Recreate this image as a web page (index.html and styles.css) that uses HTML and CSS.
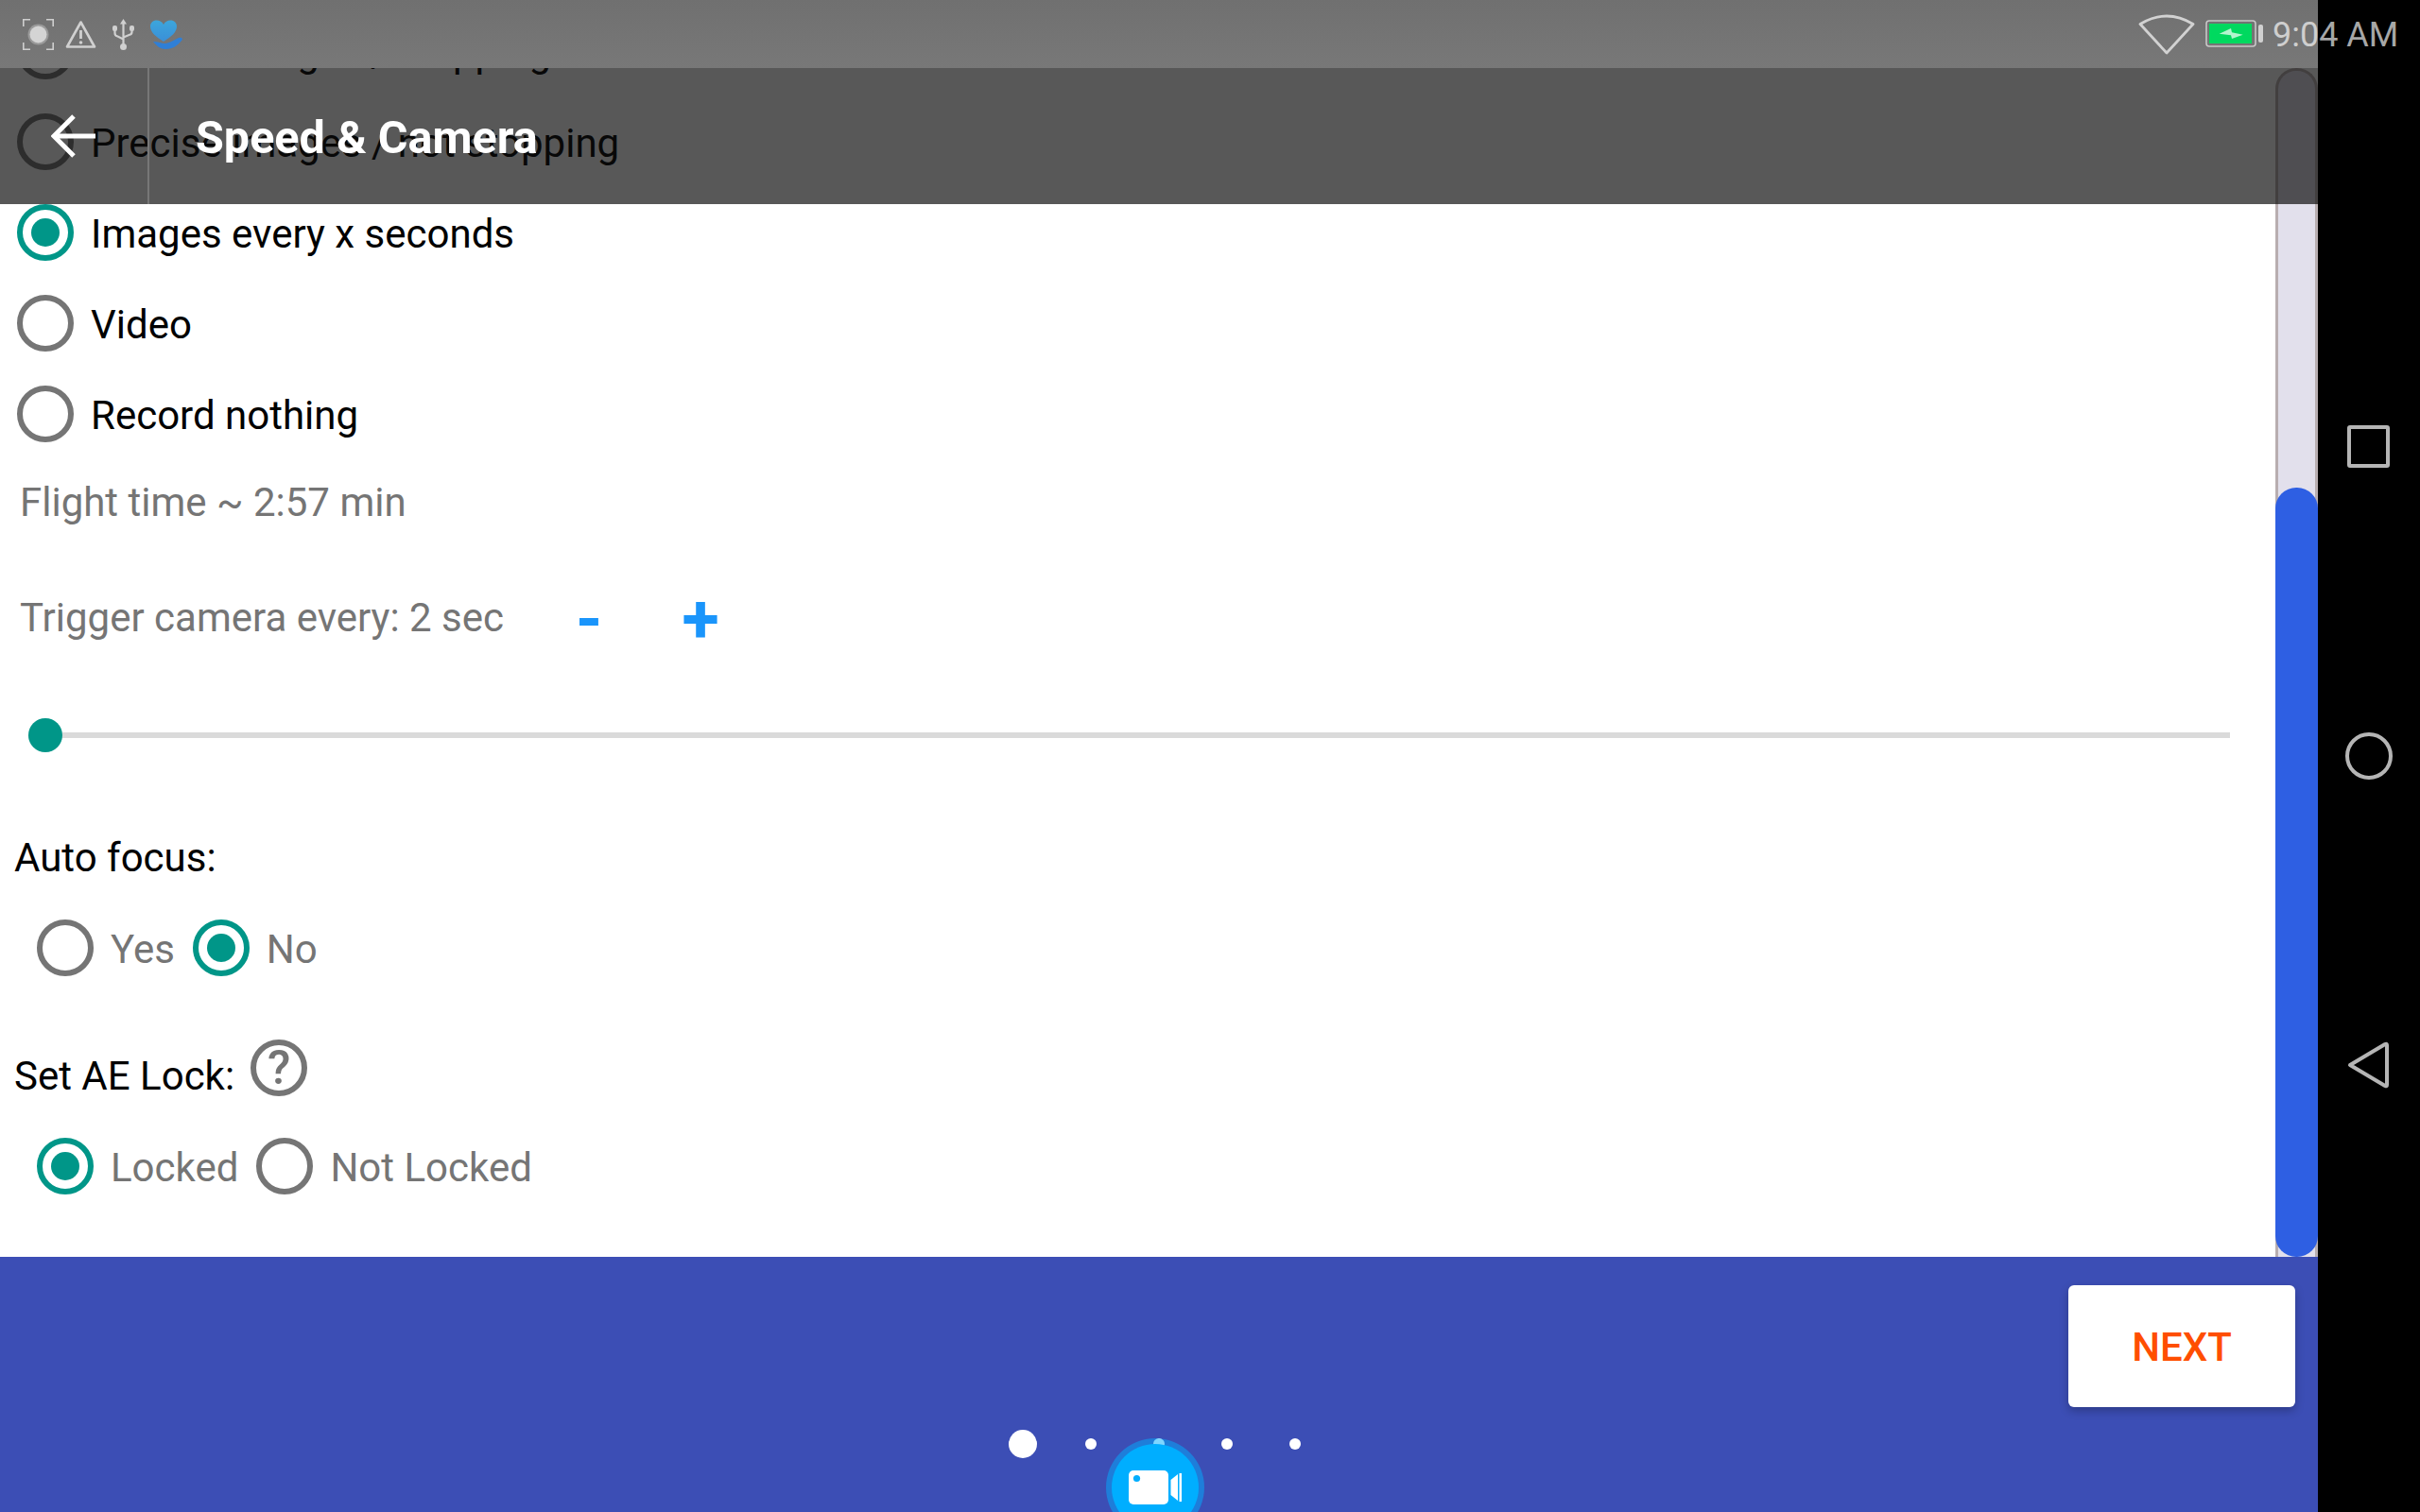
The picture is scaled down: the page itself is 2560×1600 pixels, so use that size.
FILE: index.html
```html
<!DOCTYPE html>
<html lang="en">
<head>
<meta charset="utf-8">
<title>Speed &amp; Camera</title>
<link rel="stylesheet" href="styles.css">
</head>
<body>
<div class="device">
  <div class="app">
    <header class="statusbar">
      <div class="status-left">
        <svg class="ic ic-focus" viewBox="0 0 33 33"><path d="M0.800 8V0.800H8M25 0.800H32.200V8M32.200 25V32.200H25M8 32.200H0.800V25" fill="none" stroke="#cfcfcf" stroke-width="1.600"/><circle cx="16.500" cy="16.500" r="11" fill="#9a9a9a"/><circle cx="16.500" cy="16.500" r="9" fill="#d4d4d4"/></svg>
        <svg class="ic ic-warn" viewBox="0 0 33 30"><path d="M16.500 2.500L31 28.500H2Z" fill="none" stroke="#d0d0d0" stroke-width="2.600" stroke-linejoin="round"/><path d="M16.500 11V20" stroke="#d0d0d0" stroke-width="2.800"/><circle cx="16.500" cy="24" r="1.800" fill="#d0d0d0"/></svg>
        <svg class="ic ic-usb" viewBox="0 0 23 33"><path d="M11.500 4V29M2.500 11V15Q2.500 18 5.500 18.500L11.500 21.500M20.500 11V14Q20.500 16.500 17.500 17L11.500 19.500" fill="none" stroke="#d0d0d0" stroke-width="2.200"/><path d="M11.500 0L15 5.500H8Z" fill="#d0d0d0"/><circle cx="11.500" cy="29.500" r="3.500" fill="#d0d0d0"/><rect x="0" y="7" width="5" height="6" rx="2" fill="#d0d0d0"/><rect x="18" y="7" width="5" height="6" rx="2" fill="#d0d0d0"/></svg>
        <svg class="ic ic-heart" viewBox="0 0 36 31"><defs><linearGradient id="hg" x1="0" y1="0" x2="0" y2="1"><stop offset="0" stop-color="#3ca6dc"/><stop offset="1" stop-color="#3a8fd8"/></linearGradient></defs><path d="M15 23C7 18 1 13 1 7C1 3 4 0.500 7.500 0.500C11 0.500 13.500 2 15 5C16.500 2 19 0.500 22.500 0.500C26 0.500 29 3 29 7C29 13 23 18 15 23Z" fill="url(#hg)"/><path d="M4 23C9 23 13 25 17 25C20 25 27 21 31 19C34 18 36 20 34 22C30 27 25 31 17 31C12 31 8 28 4 23Z" fill="#2f7fd6"/></svg>
      </div>
      <div class="status-right">
        <svg class="ic ic-wifi" viewBox="0 0 60 44"><path d="M2 11.500Q30 -5.500 58 11.500L30 42Z" fill="none" stroke="#d2d2d2" stroke-width="2.800" stroke-linejoin="round"/></svg>
        <svg class="ic ic-batt" viewBox="0 0 62 29"><rect x="1" y="1" width="52" height="27" rx="3" fill="none" stroke="#c8c8c8" stroke-width="1.600"/><rect x="4" y="4" width="45" height="21" fill="#00d95f"/><path d="M14.700 14.700L27 9L28 13.300L39.700 15.700L28 20L27 16.300Z" fill="#b4f5cf"/><rect x="56" y="5" width="5" height="19" rx="2" fill="#d0d0d0"/></svg>
        <span class="clock">9:04 AM</span>
      </div>
    </header>

    <main class="stage">
      <div class="scroller">
        <div class="form">
          <div class="radio-row"><span class="radio"></span><span class="label">Normal images / stopping</span></div>
          <div class="radio-row"><span class="radio"></span><span class="label">Precise images / not stopping</span></div>
          <div class="radio-row"><span class="radio on"></span><span class="label">Images every x seconds</span></div>
          <div class="radio-row"><span class="radio"></span><span class="label">Video</span></div>
          <div class="radio-row"><span class="radio"></span><span class="label">Record nothing</span></div>

          <div class="flight">Flight time ~ 2:57 min</div>
          <div class="trigger">
            <span class="trigger-text">Trigger camera every: 2 sec</span>
            <span class="step step-minus">-</span>
            <span class="step step-plus">+</span>
          </div>
          <div class="slider"><div class="track"><span class="thumb"></span></div></div>

          <div class="heading heading-focus">Auto focus:</div>
          <div class="choice choice-focus">
            <span class="radio"></span><span class="opt">Yes</span>
            <span class="radio on"></span><span class="opt">No</span>
          </div>

          <div class="heading heading-lock"><span>Set AE Lock:</span><span class="help">?</span></div>
          <div class="choice choice-lock">
            <span class="radio on"></span><span class="opt">Locked</span>
            <span class="radio"></span><span class="opt">Not Locked</span>
          </div>
        </div>
      </div>
      <div class="scrolltrack"><div class="scrollthumb"></div></div>

      <div class="toolbar">
        <svg class="back" viewBox="0 0 48 46"><path d="M47 23H4M24 2L3 23L24 44" fill="none" stroke="#fff" stroke-width="5"/></svg>
        <span class="divider"></span>
        <h1 class="title">Speed &amp; Camera</h1>
      </div>
    </main>

    <footer class="bottombar">
      <button class="next">NEXT</button>
      <div class="dots">
        <span class="cell"><span class="dot big"></span></span>
        <span class="cell"><span class="dot"></span></span>
        <span class="cell"><span class="dot"></span></span>
        <span class="cell"><span class="dot"></span></span>
        <span class="cell"><span class="dot"></span></span>
      </div>
      <div class="fab">
        <div class="fab-inner">
          <svg class="fab-icon" viewBox="0 0 56 36"><rect x="0" y="0" width="42" height="36" rx="5" fill="#fff"/><circle cx="8.500" cy="8.500" r="3.600" fill="#00aeff"/><path d="M44.500 10L52 4V32L44.500 26Z" fill="#fff"/><rect x="53.500" y="3" width="2.500" height="30" fill="#fff"/></svg>
        </div>
      </div>
    </footer>
  </div>

  <nav class="navbar">
    <span class="nav-square"></span>
    <span class="nav-circle"></span>
    <svg class="nav-back" viewBox="0 0 44 50"><path d="M3 25L40 3Q42 2 42 4V46Q42 48 40 47Z" fill="none" stroke="#b5b5b5" stroke-width="4" stroke-linejoin="round"/></svg>
  </nav>
</div>
</body>
</html>
```

FILE: styles.css
```css
* { box-sizing: border-box; }
html, body { margin: 0; padding: 0; background: #000; }
body { font-family: Roboto, "Noto Sans", sans-serif; }

.device { display: flex; width: 2560px; height: 1600px; overflow: hidden; }
.app { display: flex; flex-direction: column; width: 2452px; height: 1600px; background: #fff; }

/* status bar */
.statusbar {
  display: flex; justify-content: space-between; align-items: center;
  flex: 0 0 72px; height: 72px; background: linear-gradient(#707070, #787878);
  position: relative; z-index: 3;
}
.status-left { display: flex; align-items: center; padding-left: 24px; }
.status-right { display: flex; align-items: center; width: 273px; margin-right: -83px; flex: none; }
.ic { display: block; flex: none; }
.ic-focus { width: 33px; height: 33px; }
.ic-warn { width: 33px; height: 30px; margin-left: 12px; }
.ic-usb { width: 23px; height: 33px; margin-left: 17px; }
.ic-heart { width: 36px; height: 31px; margin-left: 16px; }
.ic-wifi { width: 60px; height: 44px; margin-top: -1px; }
.ic-batt { width: 62px; height: 29px; margin-left: 11px; margin-top: -1px; }
.clock {
  margin: 3px 0 0 9px; white-space: nowrap;
  font-size: 36px; line-height: 69px; color: rgba(255, 255, 255, .66);
}

/* stage */
.stage { position: relative; flex: 0 0 1258px; height: 1258px; display: flex; overflow: hidden; background: #fff; }
.scroller { flex: 1; overflow: hidden; height: 1258px; }
.form { margin-top: -66px; }

.radio-row { display: flex; align-items: center; height: 96px; padding-left: 18px; }
.radio {
  flex: none; display: block; position: relative; width: 60px; height: 60px;
  border: 6px solid #757575; border-radius: 50%; background: #fff;
}
.radio.on { border-color: #009688; }
.radio.on::after {
  content: ""; position: absolute; left: 9px; top: 9px; width: 30px; height: 30px;
  border-radius: 50%; background: #009688;
}
.label { margin-left: 18px; padding-top: 3px; font-size: 42px; line-height: 93px; color: #000; white-space: nowrap; }

.flight { margin-top: 1px; height: 88px; padding-left: 21px; font-size: 42px; line-height: 90px; color: #757575; }
.trigger { display: flex; align-items: center; height: 156px; padding-left: 21px; color: #757575; font-size: 42px; }
.trigger-text { width: 588px; white-space: nowrap; padding-top: 1px; }
.step { color: #1a95fb; font-weight: 700; font-size: 72px; line-height: 1; margin-top: 5px; }
.step-plus { margin-left: 84px; }

.slider { display: flex; align-items: center; height: 94px; padding-left: 30px; }
.track { position: relative; width: 2329px; height: 6px; background: #dadada; }
.thumb { position: absolute; left: 0; top: -15px; width: 36px; height: 36px; border-radius: 50%; background: #009688; }

.heading { font-size: 42px; color: #000; padding-left: 15px; }
.heading-focus { margin-top: 33px; height: 100px; line-height: 100px; }
.heading-lock { display: flex; align-items: flex-start; margin-top: 46px; height: 90px; line-height: 90px; }
.help {
  display: block; flex: none; width: 60px; height: 60px; margin: 6px 0 0 17px;
  border: 6px solid #757575; border-radius: 50%; color: #757575;
  font-size: 50px; font-weight: 500; line-height: 48px; text-align: center;
}

.choice { display: flex; align-items: center; padding-left: 39px; }
.choice-focus { height: 90px; }
.choice-lock { height: 100px; }
.opt { margin: 3px 19px 0 18px; font-size: 42px; color: #757575; white-space: nowrap; }

/* scrollbar */
.scrolltrack {
  flex: 0 0 45px; height: 1258px; display: flex; flex-direction: column; justify-content: flex-end;
  background: #e2e0ec; border: 3px solid #b8aeb0; border-bottom: 0;
  border-radius: 22px 22px 0 0;
}
.scrollthumb {
  flex: 0 0 814px; margin: 0 -3px; background: #2e5fe3; border-radius: 22px;
}

/* toolbar over the scrolled content */
.toolbar {
  position: absolute; left: 0; top: 0; width: 100%; height: 144px;
  display: flex; align-items: center; background: rgba(12, 12, 12, .686);
}
.back { flex: none; width: 48px; height: 46px; margin-left: 54px; }
.divider { flex: none; width: 2px; height: 144px; margin-left: 54px; background: #777; }
.title { margin: 2px 0 0 49px; font-size: 48.5px; font-weight: 700; color: #fff; white-space: nowrap; }

/* bottom */
.bottombar {
  position: relative; flex: 0 0 270px; height: 270px; background: #3c4eb5;
  display: flex; flex-direction: column; overflow: hidden;
}
.next {
  align-self: flex-end; width: 240px; height: 129px; margin: 30px 24px 0 0; padding: 2px 0 0;
  border: 0; border-radius: 6px; background: #fff; color: #ff4e00;
  font-family: Roboto, sans-serif; font-size: 42px; font-weight: 500;
  box-shadow: 0 4px 10px rgba(0, 0, 0, .25);
}
.dots { display: flex; justify-content: center; align-items: center; height: 30px; margin-top: 24px; }
.cell { display: flex; justify-content: center; align-items: center; width: 72px; }
.dot { display: block; width: 12px; height: 12px; border-radius: 50%; background: #fff; }
.dot.big { width: 30px; height: 30px; }
.fab {
  position: absolute; left: 1170px; top: 192px; width: 104px; height: 104px; padding: 6px;
  border-radius: 50%; background: rgba(0, 174, 255, .5);
}
.fab-inner { display: flex; align-items: center; justify-content: center; width: 92px; height: 92px; border-radius: 50%; background: #00aeff; }
.fab-icon { width: 56px; height: 36px; margin-left: -1px; }

/* nav bar */
.navbar { flex: 0 0 108px; height: 1600px; background: #000; display: flex; flex-direction: column; align-items: center; }
.nav-square { display: block; width: 45px; height: 45px; margin-top: 450px; margin-left: -2px; border: 4px solid #b5b5b5; border-radius: 3px; }
.nav-circle { display: block; width: 50px; height: 50px; margin-top: 280px; margin-left: -1px; border: 4px solid #b5b5b5; border-radius: 50%; }
.nav-back { display: block; width: 44px; height: 50px; margin-top: 277px; margin-left: -2px; }
```
